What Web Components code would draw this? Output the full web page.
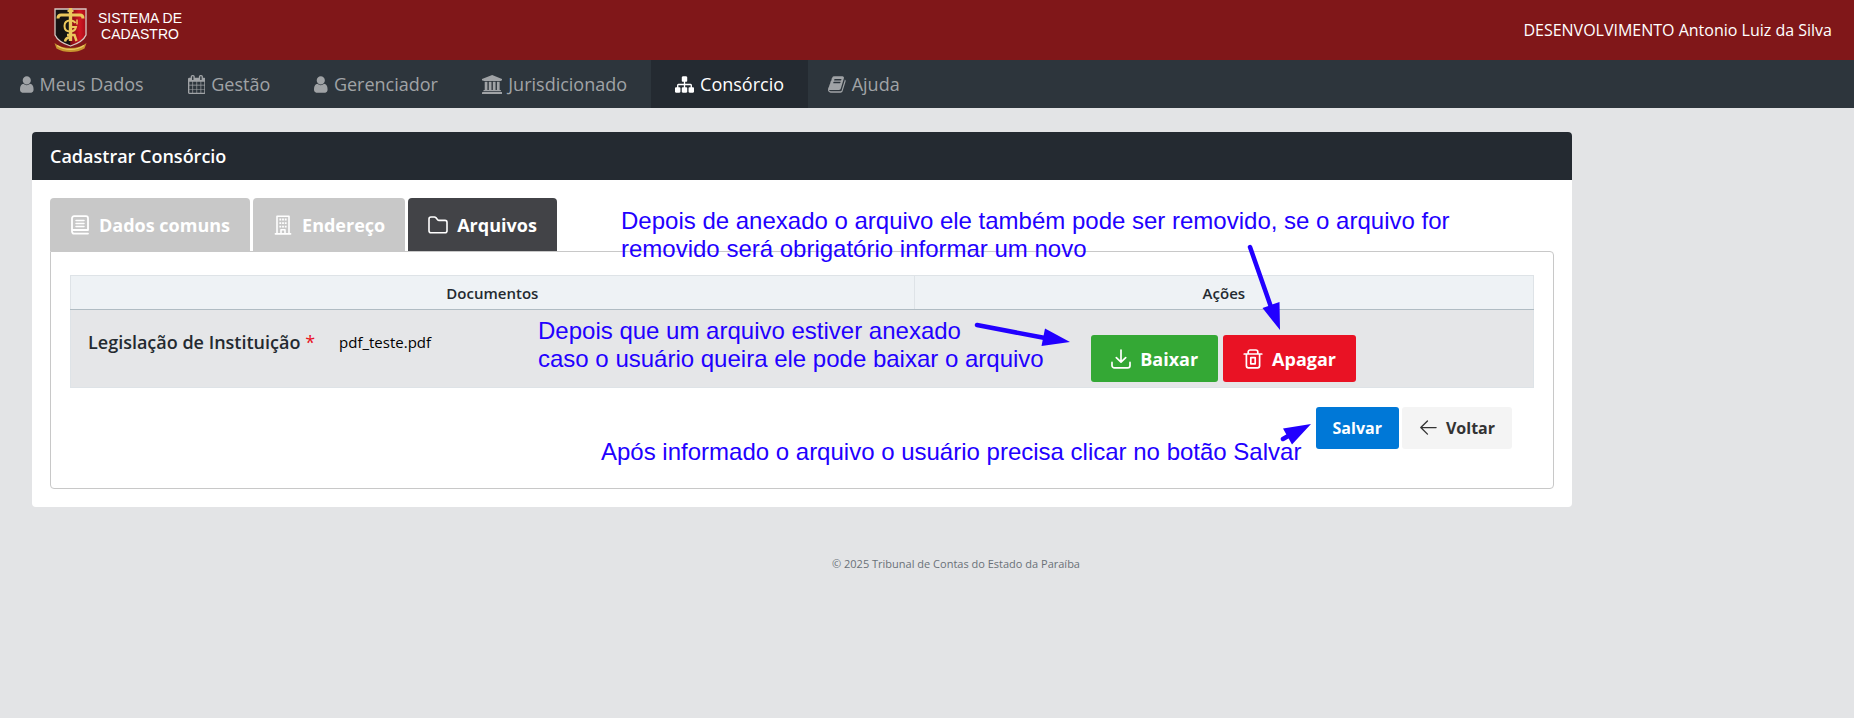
<!DOCTYPE html>
<html lang="pt-BR">
  <head>
    <meta charset="UTF-8" />
    <title>Sistema de Cadastro</title>
    <meta name="viewport" content="width=device-width, initial-scale=1.0" />
    <style>
      body {
        margin: 0;
        background: #e3e4e6;
        color: #242a30;
        font-family: "Open Sans", "Noto Sans", sans-serif;
        font-size: 15px;
      }

      main {
        display: grid;
        grid-template-columns: minmax(0, 1fr) 250px;
        padding: 24px 32px 0;
      }

      .form-actions {
        display: flex;
        justify-content: flex-end;
        gap: 3px;
        padding: 19px 22px 0 0;
      }
    </style>

    <script type="module">
      // Icons: [viewBox, markup]
      const line = 'fill="none" stroke="currentColor" stroke-linecap="round" stroke-linejoin="round"';
      const icons = {
        user: ["256 0 1280 1792", '<path d="M1536 1399q0 109-62.5 187t-150.5 78h-854q-88 0-150.5-78t-62.5-187q0-85 8.5-160.5t31.5-152 58.5-131 94-89 134.5-34.5q131 128 313 128t313-128q76 0 134.5 34.5t94 89 58.5 131 31.5 152 8.5 160.5zm-256-887q0 159-112.5 271.5t-271.5 112.5-271.5-112.5-112.5-271.5 112.5-271.5 271.5-112.5 271.5 112.5 112.5 271.5z"/>'],
        calendar: ["64 0 1664 1792", '<path d="M192 1664h288v-288h-288v288zm352 0h320v-288h-320v288zm-352-352h288v-320h-288v320zm352 0h320v-320h-320v320zm-352-384h288v-288h-288v288zm736 736h320v-288h-320v288zm-384-736h320v-288h-320v288zm768 736h288v-288h-288v288zm-384-352h320v-320h-320v320zm-352-864v-288q0-13-9.5-22.5t-22.5-9.5h-64q-13 0-22.5 9.5t-9.5 22.5v288q0 13 9.5 22.5t22.5 9.5h64q13 0 22.5-9.5t9.5-22.5zm736 864h288v-320h-288v320zm-384-384h320v-288h-320v288zm384 0h288v-288h-288v288zm32-480v-288q0-13-9.5-22.5t-22.5-9.5h-64q-13 0-22.5 9.5t-9.5 22.5v288q0 13 9.5 22.5t22.5 9.5h64q13 0 22.5-9.5t9.5-22.5zm384-64v1280q0 52-38 90t-90 38h-1408q-52 0-90-38t-38-90v-1280q0-52 38-90t90-38h128v-96q0-66 47-113t113-47h64q66 0 113 47t47 113v96h384v-96q0-66 47-113t113-47h64q66 0 113 47t47 113v96h128q52 0 90 38t38 90z"/>'],
        bank: ["0 0 1920 1792", '<path d="M960 0l960 384v128h-128q0 26-20.5 45t-48.5 19h-1526q-28 0-48.5-19t-20.5-45h-128v-128zm-704 640h256v768h128v-768h256v768h128v-768h256v768h128v-768h256v768h59q28 0 48.5 19t20.5 45v64h-1664v-64q0-26 20.5-45t48.5-19h59v-768zm1595 960q28 0 48.5 19t20.5 45v128h-1920v-128q0-26 20.5-45t48.5-19h1782z"/>'],
        sitemap: ["0 0 1792 1792", '<path d="M1792 1248v320q0 40-28 68t-68 28h-320q-40 0-68-28t-28-68v-320q0-40 28-68t68-28h96v-192h-512v192h96q40 0 68 28t28 68v320q0 40-28 68t-68 28h-320q-40 0-68-28t-28-68v-320q0-40 28-68t68-28h96v-192h-512v192h96q40 0 68 28t28 68v320q0 40-28 68t-68 28h-320q-40 0-68-28t-28-68v-320q0-40 28-68t68-28h96v-192q0-52 38-90t90-38h512v-192h-96q-40 0-68-28t-28-68v-320q0-40 28-68t68-28h320q40 0 68 28t28 68v320q0 40-28 68t-68 28h-96v192h512q52 0 90 38t38 90v192h96q40 0 68 28t28 68z"/>'],
        help: ["64 0 1664 1792", '<path d="M1703 478q40 57 18 129l-275 906q-19 64-76.5 107.5t-122.5 43.5h-923q-77 0-148.5-53.5t-99.5-131.5q-24-67-2-127 0-4 3-27t4-37q1-8-3-21.5t-3-19.5q2-11 8-21t16.5-23.5 16.5-23.5q23-38 45-91.5t30-91.5q3-10 .5-30t-.5-28q3-11 17-28t17-23q21-36 42-92t25-90q1-9-2.5-32t.5-28q4-13 22-30.5t22-22.5q19-26 42.5-84.5t27.5-96.5q1-8-3-25.5t-2-26.5q2-8 9-18t18-23 17-21q8-12 16.5-30.5t15-35 16-36 19.5-32 26.5-23.5 36-11.5 47.5 5.5l-1 3q38-9 51-9h761q74 0 114 56t18 130l-274 906q-36 119-71.5 153.5t-128.5 34.5h-869q-27 0-38 15-11 16-1 43 24 70 144 70h923q29 0 56-15.5t35-41.5l300-987q7-22 5-57 38 15 59 43zm-1064 2q-4 13 2 22.5t20 9.5h608q13 0 25.5-9.5t16.5-22.5l21-64q4-13-2-22.5t-20-9.5h-608q-13 0-25.5 9.5t-16.5 22.5zm-83 256q-4 13 2 22.5t20 9.5h608q13 0 25.5-9.5t16.5-22.5l21-64q4-13-2-22.5t-20-9.5h-608q-13 0-25.5 9.5t-16.5 22.5z"/>'],
        book: ["0 0 20 20", `<g ${line} stroke-width="1.8"><path d="M18 15H2.2M18 18.6H4a2 2 0 0 1-2-2V3.200a2 2 0 0 1 2-2h12a2 2 0 0 1 2 2V15"/><path d="M6 5.500h8M6 8.500h8M6 11.500h8" stroke-width="1.5"/></g>`],
        building: ["0 0 20 20", `<g ${line} stroke-width="1.6"><path d="M4 18.8V1.2h12v17.6M2.4 18.9h15.2M8 18.8v-4h4v4"/></g><path d="M6.4 3.6h1.8v1.8H6.4zm2.7 0h1.8v1.8H9.100zm2.700 0h1.800v1.800h-1.800zM6.400 7.200h1.800V9H6.400zm2.700 0h1.800V9H9.100zm2.700 0h1.800V9h-1.800zM6.400 10.800h1.800v1.800H6.400zm2.700 0h1.800v1.800H9.100zm2.700 0h1.800v1.800h-1.800z"/>`],
        folder: ["0 0 20 20", `<path ${line} stroke-width="1.6" d="M1 15.800V4a2 2 0 0 1 2-2h3.400q.8 0 1.400.6l1.800 2.200q.5.6 1.400.6h6a2 2 0 0 1 2 2v8.400a2 2 0 0 1-2 2H3a2 2 0 0 1-2-2z"/>`],
        download: ["0 0 20 20", `<path ${line} stroke-width="1.7" d="M10 1v12M5.300 8.600 10 13.200l4.700-4.600M1 13.400v3a2.400 2.400 0 0 0 2.400 2.400h13.200a2.400 2.400 0 0 0 2.400-2.400v-3"/>`],
        trash: ["0 0 20 20", `<path ${line} stroke-width="1.7" d="M1.200 5h17.600M5.200 5V3a2 2 0 0 1 2-2h5.600a2 2 0 0 1 2 2v2M3.400 5v11.800a2 2 0 0 0 2 2h9.200a2 2 0 0 0 2-2V5M7.800 8.600v6.200M12.200 8.600v6.200M7.800 8.600h4.400M7.800 14.800h4.400"/>`],
        back: ["0 0 20 20", `<path ${line} stroke-width="1.5" d="M19 9.500H2M9.400 2.200 2 9.500l7.400 7.300"/>`]
      };

      class AppIcon extends HTMLElement {
        constructor() {
          super();
          this.attachShadow({ mode: "open" });
        }

        connectedCallback() {
          const [box, markup] = icons[this.getAttribute("name")];
          this.shadowRoot.innerHTML = `
            <style>
              :host { display: inline-flex; flex: none; height: var(--icon-size, 20px); }
              svg { height: 100%; width: auto; fill: currentColor; }
            </style>
            <svg viewBox="${box}" aria-hidden="true">${markup}</svg>
          `;
        }
      }
      customElements.define("app-icon", AppIcon);

      // Builds a component whose shadow root is a clone of a <template>
      function define(name, setup) {
        const template = document.getElementById(name);
        customElements.define(
          name,
          class extends HTMLElement {
            constructor() {
              super();
              this.attachShadow({ mode: "open" });
              this.shadowRoot.appendChild(template.content.cloneNode(true));
            }

            connectedCallback() {
              if (setup) setup(this, this.shadowRoot);
            }
          }
        );
      }

      // The icon name has to be set before app-icon is connected
      const addIcon = (host, root) => {
        const box = root.querySelector("a, button");
        const name = host.getAttribute("icon");
        if (name && !box.querySelector("app-icon")) {
          const icon = document.createElement("app-icon");
          icon.setAttribute("name", name);
          box.prepend(icon);
        }
      };

      define("app-header");
      define("app-nav");
      define("nav-item", (host, root) => {
        addIcon(host, root);
        if (host.hasAttribute("active")) root.querySelector("a").setAttribute("aria-current", "page");
      });
      define("app-panel");
      define("app-tabs");
      define("tab-item", (host, root) => {
        addIcon(host, root);
        root.querySelector("button").setAttribute("aria-selected", host.hasAttribute("active"));
      });
      define("app-button", addIcon);
      define("document-table");
      define("app-note");
      define("app-arrows");
      define("app-footer");
    </script>
  </head>

  <body>
    <template id="app-header">
      <style>
        :host {
          display: flex;
          justify-content: space-between;
          align-items: center;
          height: 60px;
          padding: 0 22px 0 53px;
          background: #801719;
          color: #fff;
          font-size: 16px;
        }

        .brand {
          display: flex;
          align-items: flex-start;
          gap: 10px;
          height: 48px;
        }

        svg {
          width: 35px;
          height: 46px;
        }

        .name {
          padding-top: 4px;
          font: 14px/16px "Liberation Sans", sans-serif;
          text-align: center;
        }
      </style>
      <div class="brand">
        <svg viewBox="0 0 35 46" aria-hidden="true">
          <defs>
            <linearGradient id="red" x1="0" x2="1">
              <stop offset="0" stop-color="#7c0a12" />
              <stop offset=".6" stop-color="#cf1723" />
              <stop offset="1" stop-color="#a80d18" />
            </linearGradient>
          </defs>
          <path d="M2 3h15.5v36.500Q5 36 2 29.500z" fill="#151413" />
          <path d="M17.500 3H33v26.500Q30 36 17.500 39.500z" fill="url(#red)" />
          <path d="M2 3h31v26Q30 36 17.500 40 5 36 2 29z" fill="none" stroke="#d8c9c4" stroke-width="1.300" />
          <g fill="none" stroke="#ebc75c">
            <path d="M5 12.500q0-3.500 3-3.500h19q3 0 3 3.500" stroke-width="3" />
            <path d="M17.500 2v33" stroke-width="3.400" />
            <path d="M14.500 5h6" stroke-width="2" />
            <path d="M22.500 17q-1.500-2.500-5.500-2.500-5.500 0-5.500 5.500t5.500 5.500q5 0 6-4.500h-4" stroke-width="2" />
            <path d="M24 13.500v5" stroke-width="1.500" />
            <path d="M14 29h7.500l2 6M12 35.500q.5-3.500 4-4" stroke-width="2.400" />
          </g>
          <path d="M1.500 37q6 5 16 5t16-5l-2 5.500q-6 3.500-14 3.500T3.500 42.500z" fill="#c9962f" />
          <path d="M4 39.500q6 4 13.500 4T31 39.500" fill="none" stroke="#eccb68" stroke-width="1.200" />
        </svg>
        <div class="name">SISTEMA DE<br />CADASTRO</div>
      </div>
      <slot></slot>
    </template>

    <template id="app-nav">
      <style>
        :host {
          display: block;
          background: #2d353c;
        }

        nav {
          display: flex;
        }
      </style>
      <nav aria-label="Menu principal"><slot></slot></nav>
    </template>

    <template id="nav-item">
      <style>
        :host {
          --icon-size: 19px;
          display: block;
        }

        a {
          display: flex;
          align-items: center;
          gap: 6px;
          padding: 1px 24px 0 20px;
          color: #a0a3a6;
          font-size: 18px;
          line-height: 47px;
          text-decoration: none;
        }

        a:hover,
        :host([active]) a {
          background: #242a31;
          color: #fff;
        }

        :host([active]) a {
          padding-left: 24px;
        }
      </style>
      <a href="#"><slot></slot></a>
    </template>

    <template id="app-panel">
      <style>
        :host {
          display: block;
          position: relative;
          border-radius: 4px;
          background: #fff;
        }

        h1 {
          margin: 0;
          padding: 1px 18px 0;
          border-radius: 4px 4px 0 0;
          background: #242a31;
          color: #fff;
          font-size: 18px;
          font-weight: 600;
          line-height: 47px;
        }

        .body {
          padding: 18px;
        }
      </style>
      <h1><slot name="title"></slot></h1>
      <div class="body"><slot></slot></div>
      <slot name="notes"></slot>
    </template>

    <template id="app-tabs">
      <style>
        :host {
          display: block;
        }

        .tabs {
          display: flex;
          gap: 3px;
        }

        .content {
          padding: 23px 19px 39px;
          border: 1px solid #c8c8c8;
          border-radius: 0 4px 4px 4px;
        }
      </style>
      <div class="tabs" role="tablist"><slot name="tab"></slot></div>
      <div class="content"><slot></slot></div>
    </template>

    <template id="tab-item">
      <style>
        :host {
          display: block;
        }

        button {
          display: flex;
          align-items: center;
          gap: 9px;
          height: 53px;
          padding: 0 20px;
          border: none;
          border-radius: 4px 4px 0 0;
          background: #c8c8c8;
          color: #fff;
          font: inherit;
          font-size: 18px;
          font-weight: 700;
          cursor: pointer;
        }

        :host([active]) button {
          background: #424347;
        }
      </style>
      <button type="button" role="tab"><slot></slot></button>
    </template>

    <template id="app-button">
      <style>
        :host {
          display: inline-block;
        }

        button {
          display: flex;
          align-items: center;
          gap: 9px;
          height: 47px;
          padding: 0 20px;
          border: none;
          border-radius: 3px;
          background: #0078d7;
          color: #fff;
          font: inherit;
          font-size: 18px;
          font-weight: 700;
          cursor: pointer;
        }

        :host([small]) {
          --icon-size: 18px;
        }

        :host([small]) button {
          height: 42px;
          padding: 0 17px;
          font-size: 16px;
        }

        :host([kind="success"]) button {
          background: #34a835;
        }

        :host([kind="danger"]) button {
          background: #e91224;
        }

        :host([kind="light"]) button {
          background: #f4f4f4;
          color: #333;
        }
      </style>
      <button type="button"><slot></slot></button>
    </template>

    <template id="document-table">
      <style>
        :host {
          display: block;
        }

        table {
          width: 100%;
          border: 1px solid #dee3e7;
          border-collapse: collapse;
          table-layout: fixed;
        }

        .documents {
          width: 57.6%;
        }

        th {
          height: 33px;
          padding: 0;
          border: 1px solid #dee3e7;
          border-bottom-color: #b0bcc3;
          background: #eef2f5;
          font-size: 15px;
          font-weight: 600;
        }

        td {
          padding: 25px 17px 5px;
          background: #e5e6e8;
          vertical-align: top;
        }

        td:first-child {
          padding-top: 20px;
        }

        .file {
          display: flex;
          align-items: center;
          gap: 24px;
          color: #000;
          line-height: 24px;
        }

        .label {
          color: #242a30;
          font-size: 18px;
          font-weight: 600;
        }

        .label span {
          color: #e91224;
          font-weight: 400;
        }

        .actions {
          display: flex;
          justify-content: center;
          gap: 5px;
        }
      </style>
      <table>
        <thead>
          <tr>
            <th class="documents" scope="col">Documentos</th>
            <th scope="col">Ações</th>
          </tr>
        </thead>
        <tbody>
          <tr>
            <td>
              <div class="file">
                <div class="label"><slot name="label"></slot> <span>*</span></div>
                <slot name="file"></slot>
              </div>
            </td>
            <td>
              <div class="actions"><slot></slot></div>
            </td>
          </tr>
        </tbody>
      </table>
    </template>

    <template id="app-note">
      <style>
        :host {
          position: absolute;
          color: #20f;
          font: 24px/28px "Liberation Sans", sans-serif;
          white-space: nowrap;
          pointer-events: none;
        }
      </style>
      <slot></slot>
    </template>

    <template id="app-arrows">
      <style>
        :host {
          position: absolute;
          top: 0;
          left: 0;
          pointer-events: none;
        }

        svg {
          display: block;
        }
      </style>
      <svg width="1300" height="330" viewBox="0 0 1300 330" fill="#20f" stroke="#20f" stroke-linecap="round" aria-hidden="true">
        <g stroke-width="4.500">
          <path d="M1218 115l21 60M945 193l68 13M1251 307l12-7" />
        </g>
        <g stroke="none">
          <path d="M1230.500 176l17-6 .5 28zM1013 196.500l-3.500 17.500 28.500-4zM1251 296.500l9 16L1279 292z" />
        </g>
      </svg>
    </template>

    <template id="app-footer">
      <style>
        :host {
          display: block;
          padding: 47px 0 0 58px;
          color: #6a7178;
          font-size: 11px;
          line-height: 20px;
          text-align: center;
        }
      </style>
      <footer><slot></slot></footer>
    </template>

    <app-header>DESENVOLVIMENTO Antonio Luiz da Silva</app-header>

    <app-nav>
      <nav-item icon="user">Meus Dados</nav-item>
      <nav-item icon="calendar">Gestão</nav-item>
      <nav-item icon="user">Gerenciador</nav-item>
      <nav-item icon="bank">Jurisdicionado</nav-item>
      <nav-item icon="sitemap" active>Consórcio</nav-item>
      <nav-item icon="help">Ajuda</nav-item>
    </app-nav>

    <main>
      <app-panel>
        <span slot="title">Cadastrar Consórcio</span>
        <app-tabs>
          <tab-item slot="tab" icon="book">Dados comuns</tab-item>
          <tab-item slot="tab" icon="building">Endereço</tab-item>
          <tab-item slot="tab" icon="folder" active>Arquivos</tab-item>

          <document-table>
            <span slot="label">Legislação de Instituição</span>
            <span slot="file">pdf_teste.pdf</span>
            <app-button kind="success" icon="download">Baixar</app-button>
            <app-button kind="danger" icon="trash">Apagar</app-button>
          </document-table>

          <div class="form-actions">
            <app-button small>Salvar</app-button>
            <app-button small kind="light" icon="back">Voltar</app-button>
          </div>
        </app-tabs>

        <app-note slot="notes" style="top: 75px; left: 589px">
          Depois de anexado o arquivo ele também pode ser removido, se o arquivo for<br />removido será obrigatório informar um novo
        </app-note>
        <app-note slot="notes" style="top: 185px; left: 506px">
          Depois que um arquivo estiver anexado<br />caso o usuário queira ele pode baixar o arquivo
        </app-note>
        <app-note slot="notes" style="top: 306px; left: 569px">
          Após informado o arquivo o usuário precisa clicar no botão Salvar
        </app-note>
        <app-arrows slot="notes"></app-arrows>
      </app-panel>
    </main>

    <app-footer>© 2025 Tribunal de Contas do Estado da Paraíba</app-footer>
  </body>
</html>
